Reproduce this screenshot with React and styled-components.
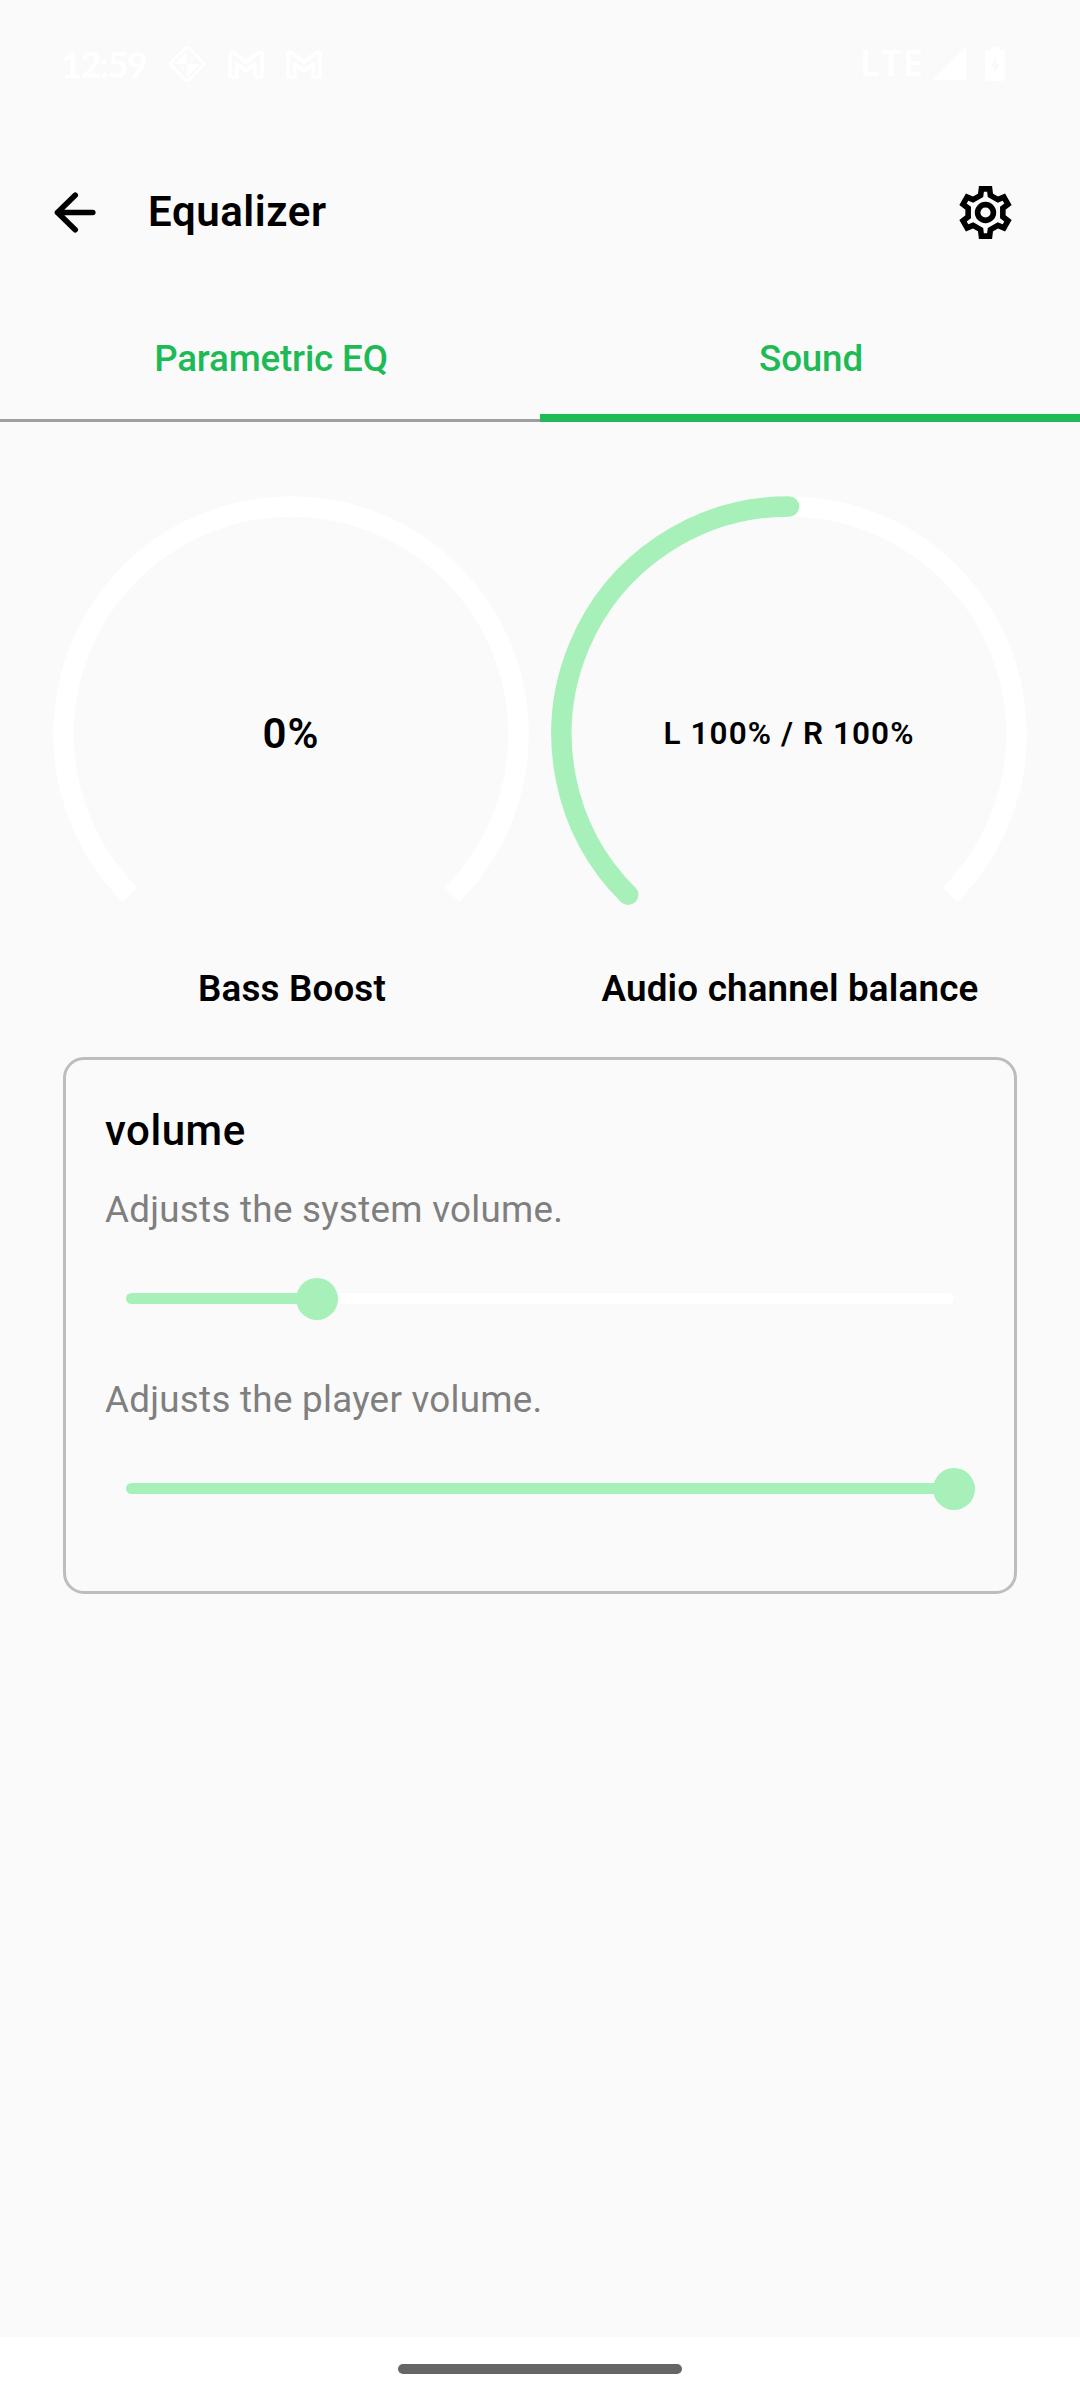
import React from "react";
import styled, { createGlobalStyle } from "styled-components";

const GlobalStyle = createGlobalStyle`
  *, *::before, *::after { box-sizing: border-box; }
  body { margin: 0; background: #fafafa; }
  h1, h2, p { margin: 0; }
  button { border: 0; padding: 0; background: none; font: inherit; color: inherit; }
  svg { display: block; flex: none; }
`;

const Screen = styled.div`
  display: flex;
  flex-direction: column;
  width: 1080px;
  height: 2400px;
  background: #fafafa;
  color: #000;
  font-family: Roboto, "Noto Sans", sans-serif;
`;

const StatusBar = styled.header`
  display: flex;
  justify-content: space-between;
  align-items: center;
  height: 139px;
  padding: 0 75px 11px 61px;
  color: #fff;
`;

const StatusGroup = styled.div`
  display: flex;
  align-items: center;
`;

const Clock = styled.span`
  width: 107px;
  padding-bottom: 1px;
  font-family: Lato, sans-serif;
  font-size: 36px;
  font-weight: 700;
  line-height: 44px;
  letter-spacing: -1.5px;
`;

const StatusIcons = styled.div`
  display: flex;
  align-items: center;
  gap: ${(p) => p.$gap}px;
`;

const Network = styled.span`
  width: 73px;
  padding-bottom: 2px;
  font-family: "Noto Sans", sans-serif;
  font-size: 36px;
  font-weight: 600;
  line-height: 44px;
  letter-spacing: 1.8px;
`;

const Toolbar = styled.div`
  display: flex;
  align-items: center;
  height: 147px;
  padding: 0 63px 0 44px;
`;

const IconButton = styled.button`
  display: flex;
  align-items: center;
  justify-content: center;
  width: 63px;
  height: 63px;
`;

const Title = styled.h1`
  flex: 1;
  padding: 0 0 2px 41px;
  font-size: 42px;
  font-weight: 600;
  line-height: 50px;
  letter-spacing: 0.58px;
`;

const Tabs = styled.nav`
  display: flex;
  height: 136px;
`;

const Tab = styled.button`
  display: flex;
  flex: 1;
  align-items: center;
  justify-content: center;
  padding-top: ${(p) => (p.$active ? 18 : 13)}px;
  padding-left: 2px;
  border-bottom: ${(p) => (p.$active ? "8px solid #1eba55" : "3px solid #9e9e9e")};
  color: #1eba55;
  font-size: 36.75px;
  font-weight: 480;
  line-height: 44px;
  letter-spacing: -0.17px;
`;

const Content = styled.main`
  flex: 1;
`;

const Gauges = styled.section`
  display: flex;
  gap: 22px;
  padding: 74px 53px 0;
`;

const GaugeColumn = styled.div`
  display: flex;
  flex-direction: column;
  align-items: center;
  width: 476px;
`;

const Dial = styled.div`
  display: grid;
  place-items: center;
  width: 476px;
  height: 476px;

  > * { grid-area: 1 / 1; }
`;

const DialValue = styled.span`
  font-size: ${(p) => p.$size}px;
  font-weight: 600;
  line-height: 50px;
  letter-spacing: 1.08px;
`;

const GaugeLabel = styled.h2`
  margin-top: -5px;
  padding-left: 2px;
  font-size: 36.75px;
  font-weight: 600;
  line-height: 44px;
  letter-spacing: 0.18px;
  white-space: nowrap;
`;

const Card = styled.section`
  height: 537px;
  margin: 46px 63px 0;
  padding: 46px 39px;
  border: 3px solid #bdbdbd;
  border-radius: 21px;
`;

const CardTitle = styled.h2`
  font-size: 42px;
  font-weight: 460;
  line-height: 50px;
  letter-spacing: 0.55px;
`;

const VolumeItem = styled.div`
  height: 190px;
  padding-top: 32px;
`;

const Hint = styled.p`
  color: #7f7f7f;
  font-size: 36.75px;
  line-height: 44px;
  letter-spacing: 0.28px;
`;

const SliderBox = styled.div`
  display: flex;
  align-items: center;
  height: 42px;
  margin: 45px 21px 0;
`;

const Track = styled.div`
  position: relative;
  flex: 1;
  height: 11px;
  border-radius: 6px;
  background: #fff;
`;

const Fill = styled.div`
  height: 11px;
  border-radius: 6px;
  background: #a7f0ba;
`;

const Thumb = styled.div`
  position: absolute;
  top: -15px;
  width: 42px;
  height: 42px;
  margin-left: -21px;
  border-radius: 50%;
  background: #a7f0ba;
`;

const NavBar = styled.footer`
  display: flex;
  justify-content: center;
  height: 63px;
  padding-top: 27px;
  background: #fff;
`;

const HomeHandle = styled.div`
  width: 284px;
  height: 10px;
  border-radius: 5px;
  background: #666;
`;

function DiamondIcon() {
  return (
    <svg width="38" height="38" viewBox="0 0 38 38" fill="#fff">
      <rect x="6.500" y="6.500" width="25" height="25" rx="3" transform="rotate(45 19 19)" fill="none" stroke="#fff" strokeWidth="3" />
      <path d="M19 6v13H6zM19 32V19h13z" />
      <path d="M21.500 11.500h4v4zM12 22h4v4zM22 23h3.500v3.500z" opacity=".8" />
    </svg>
  );
}

function MailIcon() {
  return (
    <svg width="36" height="29" viewBox="0 0 36 29">
      <path d="M2 27V5q0-4 4-2l12 9L30 3q4-2 4 2v22h-7V14l-9 7-9-7v13z" fill="none" stroke="#fff" strokeWidth="3.600" strokeLinejoin="round" />
    </svg>
  );
}

function SignalIcon() {
  return (
    <svg width="33" height="34" viewBox="0 0 33 34">
      <path d="M33 0v33H0z" fill="#fff" />
    </svg>
  );
}

function BatteryIcon() {
  return (
    <svg width="20" height="34" viewBox="0 0 20 34">
      <path d="M6 0h8v3h4q2 0 2 2v27q0 2-2 2H2q-2 0-2-2V5q0-2 2-2h4z" fill="#fff" />
      <path d="M11.500 9v8h3.500L8.500 27v-7H5.500z" fill="#fafafa" />
    </svg>
  );
}

function BackIcon() {
  return (
    <svg width="63" height="63" viewBox="0 0 63 63" fill="none" stroke="#000" strokeWidth="5.600" strokeLinecap="round" strokeLinejoin="round">
      <path d="M48.800 31.500H13.500M31.200 14.300L13.500 31.500l17.700 17.200" />
    </svg>
  );
}

const TOOTH = [[-4.9, -17.2], [-4.1, -23.600], [4.1, -23.600], [4.9, -17.2]];

function rotate([x, y], degrees) {
  const a = (degrees * Math.PI) / 180;
  return `${x * Math.cos(a) - y * Math.sin(a)},${x * Math.sin(a) + y * Math.cos(a)}`;
}

function GearIcon() {
  const outline = [0, 60, 120, 180, 240, 300]
    .flatMap((degrees) => TOOTH.map((point) => rotate(point, degrees)))
    .join(" ");
  return (
    <svg width="63" height="63" viewBox="-31.500 -31.500 63 63" fill="none" stroke="#000" strokeWidth="5.600">
      <polygon points={outline} />
      <circle r="7.900" />
    </svg>
  );
}

function Gauge({ label, value, size, filled }) {
  return (
    <GaugeColumn>
      <Dial>
        <svg width="476" height="476" viewBox="-238 -238 476 476" fill="none" strokeWidth="20.500">
          <path d="M-160.870 160.870A227.500 227.500 0 1 1 160.870 160.870" stroke="#fff" />
          {filled && (
            <path d="M-160.870 160.870A227.500 227.500 0 0 1 0-227.500" stroke="#a7f0ba" strokeLinecap="round" />
          )}
        </svg>
        <DialValue $size={size}>{value}</DialValue>
      </Dial>
      <GaugeLabel>{label}</GaugeLabel>
    </GaugeColumn>
  );
}

function Slider({ percent }) {
  return (
    <SliderBox>
      <Track>
        <Fill style={{ width: `${percent}%` }} />
        <Thumb style={{ left: `${percent}%` }} />
      </Track>
    </SliderBox>
  );
}

export default function App() {
  return (
    <Screen>
      <GlobalStyle />
      <StatusBar>
        <StatusGroup>
          <Clock>12:59</Clock>
          <StatusIcons $gap={22}>
            <DiamondIcon />
            <MailIcon />
            <MailIcon />
          </StatusIcons>
        </StatusGroup>
        <StatusGroup>
          <Network>LTE</Network>
          <StatusIcons $gap={19}>
            <SignalIcon />
            <BatteryIcon />
          </StatusIcons>
        </StatusGroup>
      </StatusBar>
      <Toolbar>
        <IconButton aria-label="Back"><BackIcon /></IconButton>
        <Title>Equalizer</Title>
        <IconButton aria-label="Settings"><GearIcon /></IconButton>
      </Toolbar>
      <Tabs>
        <Tab>Parametric EQ</Tab>
        <Tab $active>Sound</Tab>
      </Tabs>
      <Content>
        <Gauges>
          <Gauge label="Bass Boost" value="0%" size={42} />
          <Gauge label="Audio channel balance" value="L 100% / R 100%" size={31.5} filled />
        </Gauges>
        <Card>
          <CardTitle>volume</CardTitle>
          <VolumeItem>
            <Hint>Adjusts the system volume.</Hint>
            <Slider percent={23.1} />
          </VolumeItem>
          <VolumeItem>
            <Hint>Adjusts the player volume.</Hint>
            <Slider percent={100} />
          </VolumeItem>
        </Card>
      </Content>
      <NavBar>
        <HomeHandle />
      </NavBar>
    </Screen>
  );
}
